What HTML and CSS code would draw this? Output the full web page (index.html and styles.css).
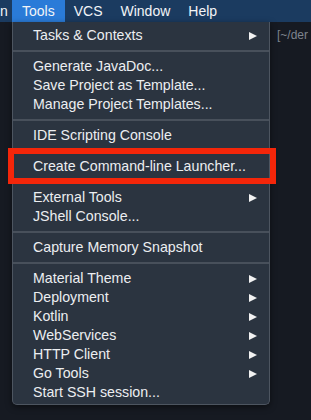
FILE: index.html
```html
<!DOCTYPE html>
<html>
<head>
<meta charset="utf-8">
<link rel="stylesheet" href="styles.css">
</head>
<body>
<div class="menubar">
  <span class="bar-item partial">n</span>
  <span class="bar-item active">Tools</span>
  <span class="bar-item">VCS</span>
  <span class="bar-item">Window</span>
  <span class="bar-item">Help</span>
</div>
<div class="editor">
  <div class="path">[~/der</div>
</div>
<div class="menu">
  <div class="item sub">Tasks &amp; Contexts<span class="arrow"></span></div>
  <div class="sep"></div>
  <div class="item">Generate JavaDoc...</div>
  <div class="item">Save Project as Template...</div>
  <div class="item">Manage Project Templates...</div>
  <div class="sep"></div>
  <div class="item">IDE Scripting Console</div>
  <div class="sep"></div>
  <div class="item">Create Command-line Launcher...</div>
  <div class="sep"></div>
  <div class="item sub">External Tools<span class="arrow"></span></div>
  <div class="item">JShell Console...</div>
  <div class="sep"></div>
  <div class="item">Capture Memory Snapshot</div>
  <div class="sep"></div>
  <div class="item sub">Material Theme<span class="arrow"></span></div>
  <div class="item sub">Deployment<span class="arrow"></span></div>
  <div class="item sub">Kotlin<span class="arrow"></span></div>
  <div class="item sub">WebServices<span class="arrow"></span></div>
  <div class="item sub">HTTP Client<span class="arrow"></span></div>
  <div class="item sub">Go Tools<span class="arrow"></span></div>
  <div class="item">Start SSH session...</div>
</div>
<div class="highlight-box"></div>
</body>
</html>
```

FILE: styles.css
```css
html, body {
  margin: 0;
  padding: 0;
}
body {
  width: 311px;
  height: 420px;
  overflow: hidden;
  background: #141720;
  font-family: "Liberation Sans", Arial, sans-serif;
  position: relative;
}
.menubar {
  height: 22px;
  background: #1b3b60;
  display: flex;
  align-items: stretch;
  color: #f2f4f7;
  font-size: 14px;
}
.bar-item {
  display: flex;
  align-items: center;
  padding: 0 9px;
  white-space: nowrap;
}
.bar-item.partial {
  width: 12px;
  padding: 0;
  justify-content: flex-end;
  overflow: hidden;
  box-sizing: border-box;
  direction: rtl;
}
.bar-item.active {
  background: #2a7bd8;
  padding: 0 10px;
}
.editor {
  height: 398px;
  background: #161a22;
  display: flex;
  justify-content: flex-end;
}
.path {
  padding: 6px 0 0 0;
  width: 34px;
  white-space: nowrap;
  color: #7e848d;
  font-size: 12px;
}
.menu {
  position: absolute;
  left: 12px;
  top: 22px;
  width: 256px;
  background: #2b3440;
  border: 1px solid #4d5560;
  border-top: none;
  border-radius: 0 0 5px 5px;
  padding: 4px 0 2px;
  color: #eceef1;
  font-size: 14.2px;
  box-shadow: 0 2px 6px rgba(0,0,0,0.5);
}
.item {
  height: 19px;
  line-height: 19px;
  padding: 0 12px 0 20px;
  display: flex;
  justify-content: space-between;
  align-items: center;
  white-space: nowrap;
}
.arrow {
  width: 0;
  height: 0;
  border-top: 4.5px solid transparent;
  border-bottom: 4.5px solid transparent;
  border-left: 8px solid #f2f2f2;
}
.sep {
  height: 2px;
  margin: 5px 0;
  background: #48505b;
}
.highlight-box {
  position: absolute;
  left: 8px;
  top: 148px;
  width: 268px;
  height: 36px;
  box-sizing: border-box;
  border: 6px solid #f4260a;
}
```
